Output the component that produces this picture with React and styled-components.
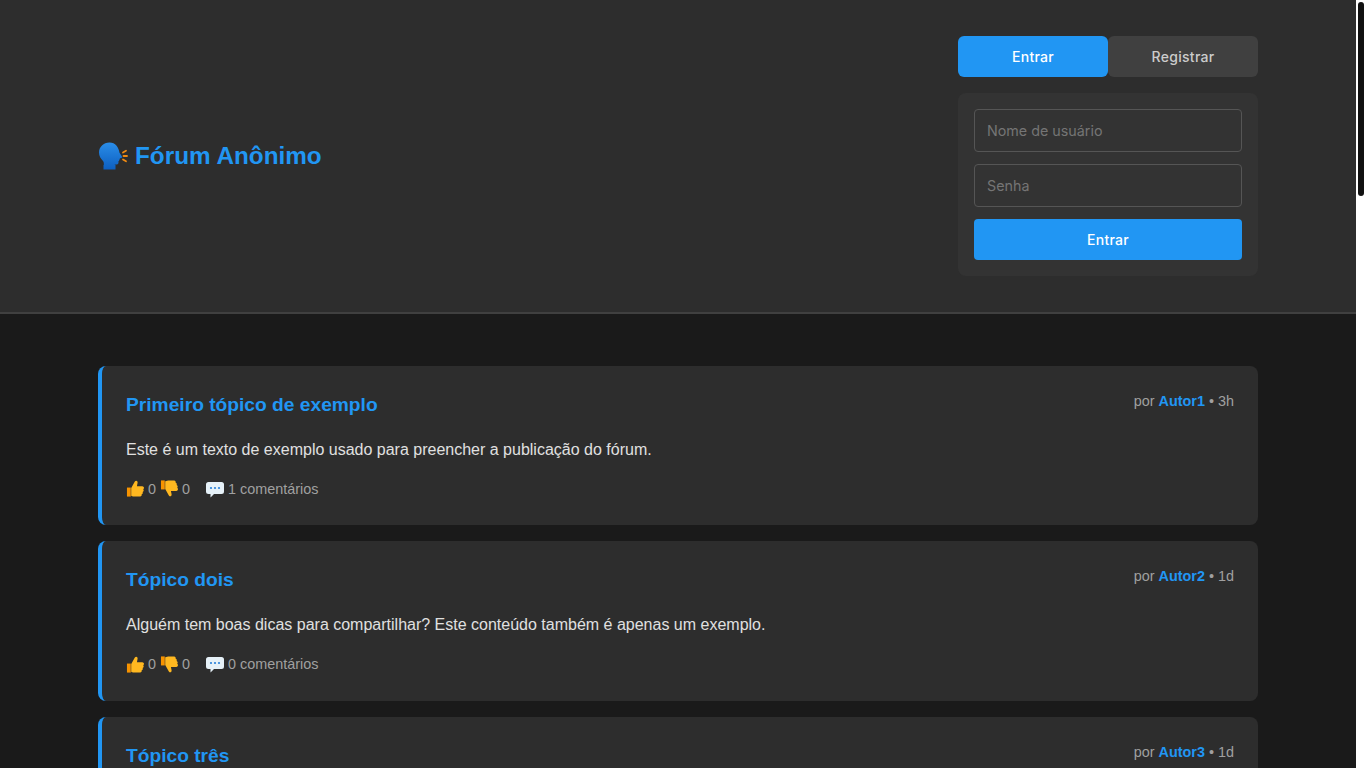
import React from "react";
import styled, { createGlobalStyle } from "styled-components";

const Global = createGlobalStyle`
  html, body { height: 100%; overflow: hidden; }
  body { margin: 0; background: #1a1a1a; color: #e0e0e0; font-family: "Liberation Sans", Arial, sans-serif; }
  * { box-sizing: border-box; }
`;

const Page = styled.div`
  padding-right: 10px;
`;
const ScrollTrack = styled.div`
  position: fixed;
  top: 0;
  right: 0;
  bottom: 0;
  width: 10px;
  padding: 2px 2px 0;
  background: #ffffff;
`;
const ScrollThumb = styled.div`
  height: 194px;
  background: #111111;
  border-radius: 3px;
`;
const Header = styled.header`
  background: #2d2d2d;
  border-bottom: 2px solid #404040;
  height: 314px;
  padding: 36px 0;
`;
const Container = styled.div`
  max-width: 1200px;
  margin: 0 auto;
  padding: 0 20px;
`;
const HeaderRow = styled(Container)`
  display: flex;
  justify-content: space-between;
  align-items: center;
  height: 240px;
`;
const Logo = styled.h1`
  margin: 0;
  display: flex;
  align-items: center;
  gap: 7px;
  font-size: 24.3px;
  font-weight: 700;
  color: #2196f3;
`;
const Auth = styled.div`
  width: 300px;
  display: flex;
  flex-direction: column;
  gap: 16px;
`;
const Tabs = styled.div`
  display: flex;
`;
const Tab = styled.button`
  flex: 1;
  height: 41px;
  border: 0;
  border-radius: 6px;
  font: 500 14px Inter, sans-serif;
  letter-spacing: 0.3px;
  color: ${(p) => (p.$active ? "#ffffff" : "#cccccc")};
  background: ${(p) => (p.$active ? "#2196f3" : "#404040")};
`;
const Form = styled.div`
  background: #333333;
  border-radius: 8px;
  padding: 16px;
  display: flex;
  flex-direction: column;
  gap: 12px;
`;
const Input = styled.input`
  height: 43px;
  padding: 0 12px;
  background: #333333;
  border: 1px solid #555555;
  border-radius: 4px;
  color: #e0e0e0;
  font: 400 14.3px Inter, sans-serif;
  &::placeholder { color: #757575; }
`;
const Submit = styled.button`
  height: 41px;
  border: 0;
  border-radius: 4px;
  background: #2196f3;
  color: #ffffff;
  font: 500 14px Inter, sans-serif;
  letter-spacing: 0.3px;
`;
const Feed = styled(Container)`
  padding-top: 51.6px;
  display: flex;
  flex-direction: column;
  gap: 16px;
`;
const Card = styled.article`
  background: #2d2d2d;
  border-left: 4px solid #2196f3;
  border-radius: 8px;
  padding: 24px;
  height: 159.5px;
`;
const CardHead = styled.div`
  display: flex;
  justify-content: space-between;
  align-items: flex-start;
`;
const Title = styled.h2`
  margin: 3px 0 0;
  font-size: 19.2px;
  line-height: 24px;
  font-weight: 700;
  color: #2196f3;
`;
const Meta = styled.div`
  font-size: 14.4px;
  line-height: 22px;
  color: #a0a0a0;
`;
const Author = styled.strong`
  color: #2196f3;
`;
const Body = styled.p`
  margin: 21px 0 0;
  font-size: 16px;
  line-height: 24px;
  color: #e0e0e0;
`;
const Stats = styled.div`
  margin-top: 16px;
  display: flex;
  align-items: center;
  gap: 16px;
  font-size: 14.4px;
  line-height: 22px;
  color: #a0a0a0;
`;
const Stat = styled.span`
  display: inline-flex;
  align-items: center;
  gap: ${(p) => p.$gap || 3}px;
`;
const Votes = styled.span`
  display: inline-flex;
  gap: 4px;
`;

const HeadIcon = () => (
  <svg width="30" height="30" viewBox="0 0 30 30" aria-hidden="true">
    <defs>
      <linearGradient id="hd" x1="0" y1="0" x2="0" y2="1">
        <stop offset="0" stopColor="#2a8de8" />
        <stop offset="1" stopColor="#0d5fc0" />
      </linearGradient>
    </defs>
    <path
      d="M11.500 1.500C5.500 1.500 1 6 1 11.500c0 3.700 1.800 6.200 3.800 8.200.9 1 1.200 2.500 1 4.300h-.3v4.500h12v-4.500h-1.300c.8-.6 2.400-.4 3.400-.8 1-.5 1-1.700.8-3 .8-.3 1-.8.7-1.400.9-.3 1-.9.6-1.600l1.700-.3c.8-.2.9-.9.4-1.600l-2.300-3.600C20.500 6 17.500 1.500 11.500 1.500z"
      fill="url(#hd)"
    />
    <g fill="none" stroke="#f08a12" strokeWidth="1.800" strokeLinecap="round">
      <path d="M25 11.500l3-1.700" />
      <path d="M25.500 15h3.500" />
      <path d="M25 18.500l3 1.700" />
    </g>
  </svg>
);

const ThumbPaths = () => (
  <>
    <path d="M1 9h4v9.500H1z" fill="#f79300" />
    <path
      d="M5.500 9.500L9.300 2.600c1-1.600 3.200-.9 2.900 1.300l-.7 3.600h5.700c2 0 2.300 2.500.9 3.200 1 1 .5 2.500-.6 2.900.6 1.100-.1 2.300-1 2.500.3 1.300-.4 2.400-1.600 2.400H8.500c-1.200 0-3-.9-3-.9z"
      fill="#ffb820"
    />
  </>
);
const ThumbUp = () => (
  <svg width="19" height="19" viewBox="0 0 20 20" aria-hidden="true">
    <ThumbPaths />
  </svg>
);
const ThumbDown = () => (
  <svg width="19" height="19" viewBox="0 0 20 20" aria-hidden="true">
    <g transform="matrix(1 0 0 -1 0 20)">
      <ThumbPaths />
    </g>
  </svg>
);
const Bubble = () => (
  <svg width="18" height="18" viewBox="0 0 18 18" aria-hidden="true">
    <path
      d="M2.500 2h13A2.500 2.500 0 0 1 18 4.500v7a2.500 2.500 0 0 1-2.500 2.500H8l-3.500 3.500V14h-2A2.500 2.500 0 0 1 0 11.500v-7A2.500 2.500 0 0 1 2.500 2z"
      fill="#e6f1f8"
    />
    <g fill="#2a80d8">
      <circle cx="5" cy="8" r="1.100" />
      <circle cx="9" cy="8" r="1.100" />
      <circle cx="13" cy="8" r="1.100" />
    </g>
  </svg>
);

const posts = [
  ["Primeiro tópico de exemplo", "Este é um texto de exemplo usado para preencher a publicação do fórum.", "Autor1", "3h", 1],
  ["Tópico dois", "Alguém tem boas dicas para compartilhar? Este conteúdo também é apenas um exemplo.", "Autor2", "1d", 0],
  ["Tópico três", "Mais um texto de exemplo para demonstrar o cartão de publicação.", "Autor3", "1d", 0],
];

export default function App() {
  return (
    <Page>
      <Global />
      <Header>
        <HeaderRow>
          <Logo><HeadIcon />Fórum Anônimo</Logo>
          <Auth>
            <Tabs>
              <Tab $active>Entrar</Tab>
              <Tab>Registrar</Tab>
            </Tabs>
            <Form>
              <Input placeholder="Nome de usuário" />
              <Input placeholder="Senha" />
              <Submit>Entrar</Submit>
            </Form>
          </Auth>
        </HeaderRow>
      </Header>
      <Feed>
        {posts.map(([title, body, author, age, comments], i) => (
          <Card key={i}>
            <CardHead>
              <Title>{title}</Title>
              <Meta>por <Author>{author}</Author> • {age}</Meta>
            </CardHead>
            <Body>{body}</Body>
            <Stats>
              <Votes>
                <Stat><ThumbUp />0</Stat>
                <Stat><ThumbDown />0</Stat>
              </Votes>
              <Stat $gap={4}><Bubble />{comments} comentários</Stat>
            </Stats>
          </Card>
        ))}
      </Feed>
      <ScrollTrack><ScrollThumb /></ScrollTrack>
    </Page>
  );
}
